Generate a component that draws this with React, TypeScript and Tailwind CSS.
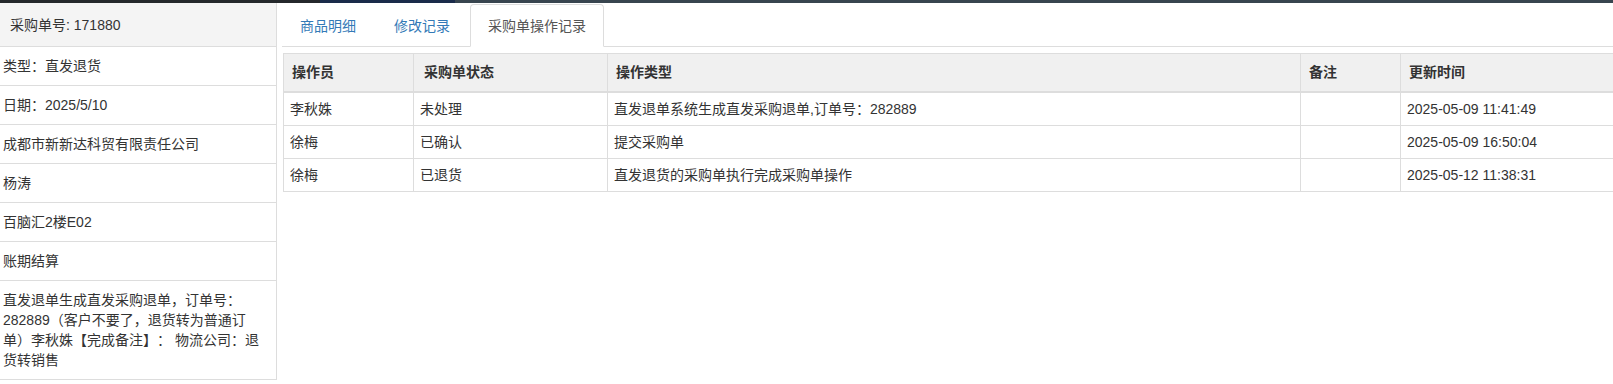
import React from "react";

const rows = [
  { op: "李秋姝", status: "未处理", type: "直发退单系统生成直发采购退单,订单号：282889", note: "", time: "2025-05-09 11:41:49" },
  { op: "徐梅", status: "已确认", type: "提交采购单", note: "", time: "2025-05-09 16:50:04" },
  { op: "徐梅", status: "已退货", type: "直发退货的采购单执行完成采购单操作", note: "", time: "2025-05-12 11:38:31" },
];

const sideRows = [
  "类型：直发退货",
  "日期：2025/5/10",
  "成都市新新达科贸有限责任公司",
  "杨涛",
  "百脑汇2楼E02",
  "账期结算",
  "直发退单生成直发采购退单，订单号：282889（客户不要了，退货转为普通订单）李秋姝【完成备注】： 物流公司：退货转销售",
];

export default function App() {
  return (
    <div className="w-[1613px] h-[384px] overflow-hidden bg-white text-sm text-[#333] [text-spacing-trim:space-all] font-['Liberation_Sans','Noto_Sans_CJK_SC',sans-serif]">
      <div className="flex h-[3px]">
        <div className="w-[320px] bg-[#24282b]" />
        <div className="w-[135px] bg-[#1a2b4a]" />
        <div className="flex-1 bg-[#38454f]" />
      </div>
      <div className="flex">
        <aside className="w-[277px] shrink-0 border-r border-[#ddd]">
          <div className="h-[44px] flex items-center px-[10px] bg-[#f4f4f4] border-b border-[#ddd]">
            采购单号: 171880
          </div>
          {sideRows.map((t, i) => (
            <div key={i} className="pl-[3px] pr-[8px] py-[9px] leading-[20px] border-b border-[#ddd]">
              {t}
            </div>
          ))}
        </aside>
        <main className="flex-1 min-w-0 pl-[5px] overflow-hidden">
          <ul className="flex items-end h-[44px] border-b border-[#ddd]">
            <li className="-mb-px mr-[2px]">
              <a className="flex items-center h-[43px] px-[17px] text-[#337ab7] border border-transparent">商品明细</a>
            </li>
            <li className="-mb-px mr-[2px]">
              <a className="flex items-center h-[43px] px-[17px] text-[#337ab7] border border-transparent">修改记录</a>
            </li>
            <li className="-mb-px mr-[2px]">
              <a className="flex items-center h-[43px] px-[17px] text-[#555] bg-white border border-[#ddd] border-b-transparent rounded-t-[4px]">
                采购单操作记录
              </a>
            </li>
          </ul>
          <table className="mt-[6px] ml-[1px] w-[1340px] table-fixed border-collapse">
            <colgroup>
              <col className="w-[130px]" />
              <col className="w-[194px]" />
              <col className="w-[693px]" />
              <col className="w-[100px]" />
              <col className="w-[223px]" />
            </colgroup>
            <thead>
              <tr className="bg-[#f0f0f0]">
                {["操作员", "采购单状态", "操作类型", "备注", "更新时间"].map((h, i) => (
                  <th
                    key={h}
                    className={`text-left font-bold py-[8px] leading-[21px] border border-[#ddd] border-b-2 ${i === 1 ? "px-[10px]" : "px-[8px]"}`}
                  >
                    {h}
                  </th>
                ))}
              </tr>
            </thead>
            <tbody>
              {rows.map((r, i) => (
                <tr key={i}>
                  <td className="px-[6px] py-[6px] leading-[20px] border border-[#ddd]">{r.op}</td>
                  <td className="px-[6px] py-[6px] leading-[20px] border border-[#ddd]">{r.status}</td>
                  <td className="px-[6px] py-[6px] leading-[20px] border border-[#ddd]">{r.type}</td>
                  <td className="px-[6px] py-[6px] leading-[20px] border border-[#ddd]">{r.note}</td>
                  <td className="px-[6px] py-[6px] leading-[20px] border border-[#ddd]">{r.time}</td>
                </tr>
              ))}
            </tbody>
          </table>
        </main>
      </div>
    </div>
  );
}
